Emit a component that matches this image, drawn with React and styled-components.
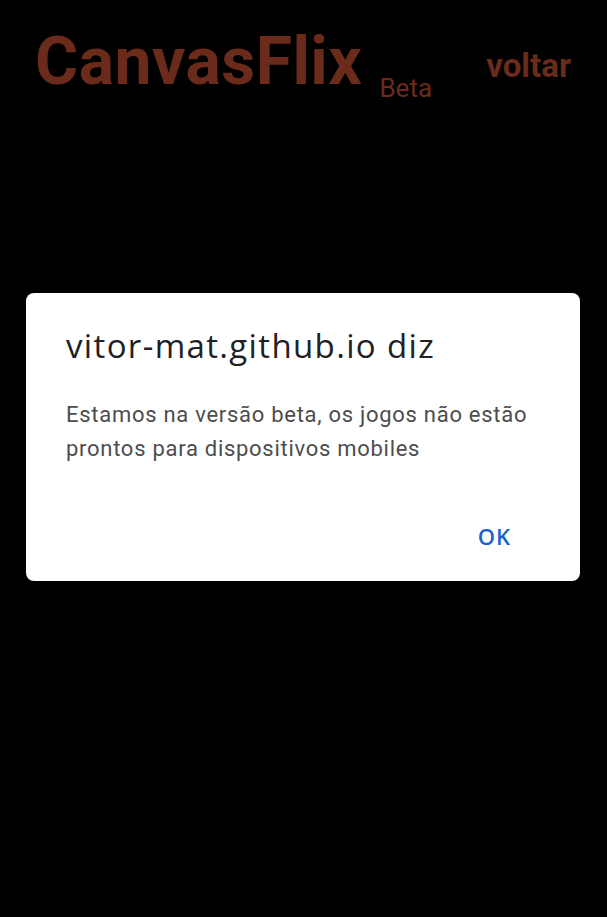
import React from "react";
import styled, { createGlobalStyle } from "styled-components";

const GlobalStyle = createGlobalStyle`
  html, body {
    margin: 0;
    padding: 0;
    background: #000;
    height: 100%;
  }
  #root {
    min-height: 100%;
  }
`;

const Page = styled.div`
  width: 607px;
  height: 917px;
  background: #000;
  font-family: Roboto, "Liberation Sans", sans-serif;
  overflow: hidden;
`;

const Header = styled.header`
  display: flex;
  align-items: flex-start;
  padding: 24px 36px 0 35px;
  color: #6b2b1b;
`;

const Brand = styled.div`
  display: flex;
  align-items: flex-end;
`;

const Logo = styled.h1`
  margin: 0;
  font-size: 66px;
  font-weight: 700;
  line-height: 76px;
  letter-spacing: 0.5px;
`;

const Tag = styled.span`
  font-size: 26px;
  line-height: 26px;
  margin: 0 0 -1px 17px;
`;

const BackLink = styled.a`
  margin: 24px 0 0 auto;
  font-size: 33px;
  font-weight: 700;
  line-height: 36px;
  color: inherit;
  text-decoration: none;
`;

const Overlay = styled.div`
  position: fixed;
  inset: 0;
  display: flex;
  justify-content: center;
  padding: 293px 27px 0 26px;
`;

const Dialog = styled.div`
  width: 554px;
  height: 288px;
  box-sizing: border-box;
  background: #fff;
  border-radius: 8px;
  padding: 32px 40px 0 40px;
  display: flex;
  flex-direction: column;
`;

const Title = styled.h2`
  margin: 0;
  font-family: "Open Sans", Roboto, sans-serif;
  font-weight: 400;
  font-size: 33px;
  line-height: 42px;
  letter-spacing: 1.35px;
  color: #202124;
`;

const Message = styled.p`
  margin: 31px 0 0 0;
  font-size: 22px;
  line-height: 34px;
  letter-spacing: 0.72px;
  color: #4d4d4d;
`;

const Actions = styled.div`
  display: flex;
  justify-content: flex-end;
  margin-top: auto;
  padding-bottom: 26px;
`;

const OkButton = styled.button`
  border: none;
  background: none;
  font-family: "Open Sans", Roboto, sans-serif;
  font-size: 22px;
  font-weight: 600;
  letter-spacing: 1px;
  color: #1a62c9;
  padding: 4px 29px 4px 0;
  cursor: pointer;
`;

export default function App() {
  return (
    <Page>
      <GlobalStyle />
      <Header>
        <Brand>
          <Logo>CanvasFlix</Logo>
          <Tag>Beta</Tag>
        </Brand>
        <BackLink href="#">voltar</BackLink>
      </Header>
      <Overlay>
        <Dialog>
          <Title>vitor-mat.github.io diz</Title>
          <Message>
            Estamos na versão beta, os jogos não estão prontos para dispositivos mobiles
          </Message>
          <Actions>
            <OkButton>OK</OkButton>
          </Actions>
        </Dialog>
      </Overlay>
    </Page>
  );
}
